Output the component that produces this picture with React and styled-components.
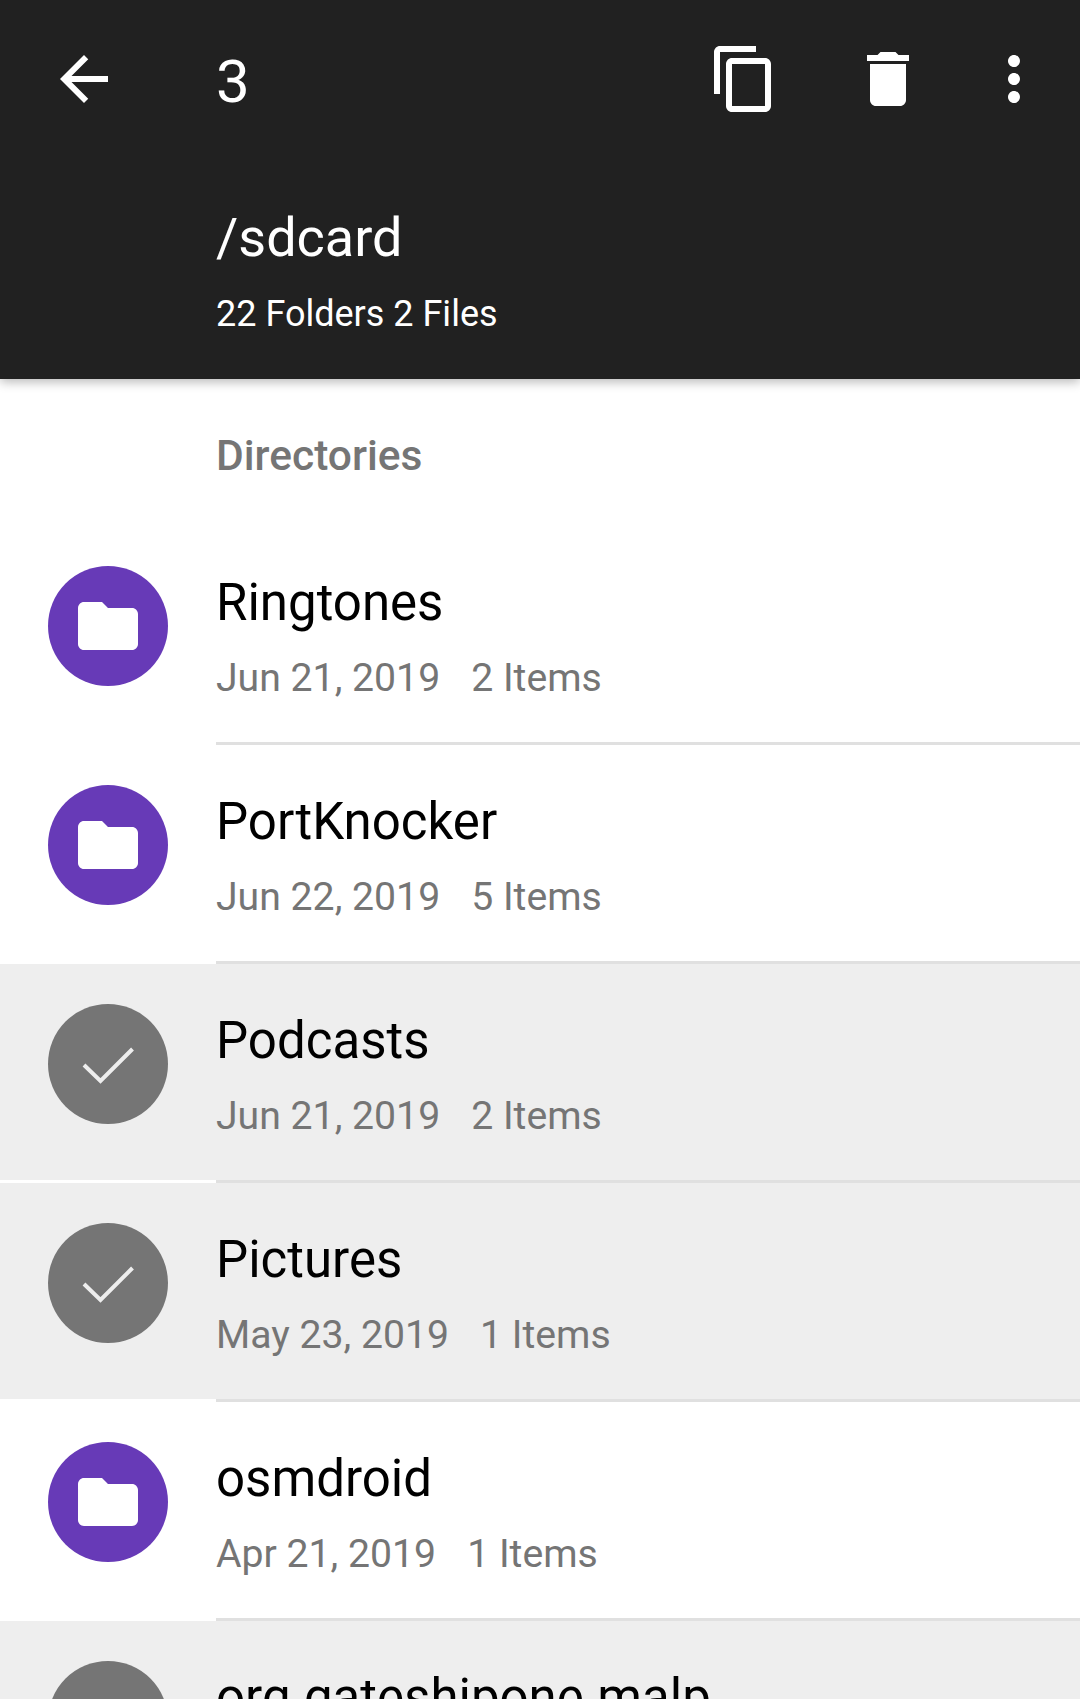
import React from "react";
import styled, { createGlobalStyle } from "styled-components";

const GlobalStyle = createGlobalStyle`
  html, body {
    margin: 0;
    padding: 0;
    height: 1699px;
    overflow: hidden;
    background: #fff;
    font-family: Roboto, "Noto Sans", sans-serif;
  }
`;

const Page = styled.div`
  width: 1080px;
  height: 1699px;
  overflow: hidden;
  background: #fff;
`;

const Header = styled.header`
  position: relative;
  z-index: 1;
  height: 379px;
  background: #212121;
  color: #fff;
  box-shadow: 0 3px 10px rgba(0, 0, 0, 0.28);
`;

const Toolbar = styled.div`
  display: flex;
  align-items: flex-start;
  height: 206px;
  padding-top: 43px;
  padding-left: 48px;
  box-sizing: border-box;
`;

const Count = styled.div`
  margin-left: 96px;
  margin-top: 3px;
  font-size: 60px;
  line-height: 72px;
  margin-right: auto;
`;

const ToolIcon = styled.svg`
  flex: none;
  width: 72px;
  height: 72px;
  fill: #fff;
  margin-right: ${(p) => p.$gap || 0}px;
`;

const PathBlock = styled.div`
  padding-left: 216px;
`;

const PathTitle = styled.div`
  font-size: 54px;
  line-height: 64px;
`;

const PathInfo = styled.div`
  margin-top: 22px;
  font-size: 36px;
  line-height: 44px;
`;

const SectionLabel = styled.div`
  height: 147px;
  box-sizing: border-box;
  padding: 51px 0 0 216px;
  font-size: 42.5px;
  line-height: 52px;
  font-weight: 500;
  color: #757575;
`;

const Row = styled.div`
  display: flex;
  height: 216px;
  box-sizing: border-box;
  padding: 40px 0 0 48px;
  background: ${(p) => (p.$selected ? "#eeeeee" : "#ffffff")};
`;

const Avatar = styled.div`
  flex: none;
  display: flex;
  align-items: center;
  justify-content: center;
  width: 120px;
  height: 120px;
  border-radius: 50%;
  background: ${(p) => (p.$selected ? "#757575" : "#673ab7")};
`;

const AvatarIcon = styled.svg`
  width: 72px;
  height: 72px;
`;

const RowText = styled.div`
  margin-left: 48px;
  min-width: 0;
`;

const RowTitle = styled.div`
  margin-top: 5px;
  font-size: 51px;
  line-height: 64px;
  color: #000;
  white-space: nowrap;
`;

const RowMeta = styled.div`
  display: flex;
  gap: 31px;
  margin-top: 18px;
  font-size: 39.2px;
  line-height: 50px;
  color: #757575;
  white-space: nowrap;
`;

const Divider = styled.div`
  height: 3px;
  margin-left: 216px;
  background: #e0e0e0;
`;

const FolderIcon = () => (
  <AvatarIcon viewBox="0 0 24 24" fill="#fff">
    <path d="M10 4H4c-1.1 0-1.99.9-1.99 2L2 18c0 1.1.9 2 2 2h16c1.1 0 2-.9 2-2V8c0-1.1-.9-2-2-2h-8l-2-2z" />
  </AvatarIcon>
);

const CheckIcon = () => (
  <AvatarIcon viewBox="0 0 72 72" fill="none">
    <polyline points="12,37 28.5,53 60.5,21" stroke="#eeeeee" strokeWidth="4" />
  </AvatarIcon>
);

const folders = [
  { name: "Ringtones", date: "Jun 21, 2019", items: "2 Items" },
  { name: "PortKnocker", date: "Jun 22, 2019", items: "5 Items" },
  { name: "Podcasts", date: "Jun 21, 2019", items: "2 Items", selected: true },
  { name: "Pictures", date: "May 23, 2019", items: "1 Items", selected: true },
  { name: "osmdroid", date: "Apr 21, 2019", items: "1 Items" },
  { name: "org.gateshipone.malp", selected: true },
];

export default function App() {
  return (
    <Page>
      <GlobalStyle />
      <Header>
        <Toolbar>
          <ToolIcon viewBox="0 0 24 24">
            <path d="M20 11H7.83l5.59-5.59L12 4l-8 8 8 8 1.41-1.41L7.83 13H20v-2z" />
          </ToolIcon>
          <Count>3</Count>
          <ToolIcon viewBox="0 0 24 24" $gap={72}>
            <path d="M16 1H4c-1.1 0-2 .9-2 2v14h2V3h12V1zm3 4H8c-1.1 0-2 .9-2 2v14c0 1.1.9 2 2 2h11c1.1 0 2-.9 2-2V7c0-1.1-.9-2-2-2zm0 16H8V7h11v14z" />
          </ToolIcon>
          <ToolIcon viewBox="0 0 24 24" $gap={54}>
            <path d="M6 19c0 1.1.9 2 2 2h8c1.1 0 2-.9 2-2V7H6v12zM19 4h-3.5l-1-1h-5l-1 1H5v2h14V4z" />
          </ToolIcon>
          <ToolIcon viewBox="0 0 24 24" $gap={30}>
            <path d="M12 8c1.1 0 2-.9 2-2s-.9-2-2-2-2 .9-2 2 .9 2 2 2zm0 2c-1.1 0-2 .9-2 2s.9 2 2 2 2-.9 2-2-.9-2-2-2zm0 6c-1.1 0-2 .9-2 2s.9 2 2 2 2-.9 2-2-.9-2-2-2z" />
          </ToolIcon>
        </Toolbar>
        <PathBlock>
          <PathTitle>/sdcard</PathTitle>
          <PathInfo>22 Folders 2 Files</PathInfo>
        </PathBlock>
      </Header>
      <SectionLabel>Directories</SectionLabel>
      {folders.map((f) => (
        <React.Fragment key={f.name}>
          <Row $selected={f.selected}>
            <Avatar $selected={f.selected}>
              {f.selected ? <CheckIcon /> : <FolderIcon />}
            </Avatar>
            <RowText>
              <RowTitle>{f.name}</RowTitle>
              {f.date && (
                <RowMeta>
                  <span>{f.date}</span>
                  <span>{f.items}</span>
                </RowMeta>
              )}
            </RowText>
          </Row>
          <Divider />
        </React.Fragment>
      ))}
    </Page>
  );
}
